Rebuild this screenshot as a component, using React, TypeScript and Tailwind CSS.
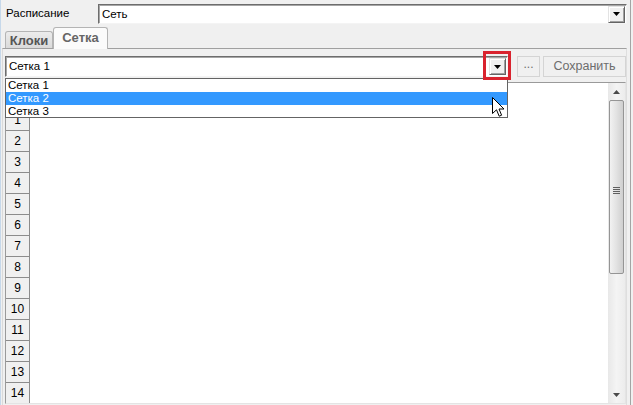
import React from 'react';

const Arrow = ({ up = false }: { up?: boolean }) => (
  <svg width="7" height="4" viewBox="0 0 7 4" className={up ? 'rotate-180' : ''}>
    <path d="M0 0 H7 L3.5 4 Z" fill="#000" />
  </svg>
);

const DropBtn = () => (
  <div className="w-[17px] h-[17px] flex items-center justify-center bg-[#f0f0f0] border border-t-[#e3e3e3] border-l-[#e3e3e3] border-b-[#646464] border-r-[#646464] shadow-[inset_1px_1px_0_#ffffff,inset_-1px_-1px_0_#a0a0a0]">
    <Arrow />
  </div>
);

const Combo = ({ value, className }: { value: string; className: string }) => (
  <div
    className={`flex items-center bg-white border border-t-[#6d6d6d] border-l-[#6d6d6d] border-b-[#f4f4f4] border-r-[#f4f4f4] shadow-[inset_1px_1px_0_#a6a6a6] ${className}`}
  >
    <span className="flex-1 pl-[3px] leading-none pt-[1px] text-[11.5px]">{value}</span>
    <div className="pr-[1px]">
      <DropBtn />
    </div>
  </div>
);

export default function App() {
  const rows = Array.from({ length: 14 }, (_, i) => i + 1);

  return (
    <div className="w-[633px] h-[405px] bg-[#f0f0f0] relative overflow-hidden font-['Liberation_Sans',Arial,sans-serif] text-[11px] text-black">
      <div className="w-[631px] h-full border-l border-l-[#c6d8ea] border-r border-r-[#a4a4a4] flex flex-col">
        {/* Расписание */}
        <div className="flex items-center pt-[4px] shrink-0">
          <div className="w-[97px] pl-[5px] text-[11.5px]">Расписание</div>
          <Combo value="Сеть" className="w-[529px] h-[20px]" />
        </div>

        {/* Tabs */}
        <div className="h-[24px] shrink-0 flex items-end pl-[4px]">
          <div className="w-[48px] h-[17px] rounded-t-[3px] border border-b-0 border-[#b4b4b4] bg-gradient-to-b from-[#ececec] to-[#dadada] flex items-center justify-center font-bold text-[13px] text-[#555] pt-[1px]">
            Клоки
          </div>
          <div className="relative z-10 -mb-px w-[55px] h-[22px] rounded-t-[3px] border border-b-0 border-[#b4b4b4] bg-[#fbfbfb] flex items-start justify-center font-bold text-[13px] text-[#666]">
            Сетка
          </div>
        </div>

        {/* Panel */}
        <div className="flex-1 min-h-0 ml-[1px] mr-[3px] border-t border-t-[#a0a0a0] border-l border-l-[#dadada] border-r border-r-[#dedede] pl-[2px] flex flex-col">
          <div className="flex items-center pt-[7px] h-[28px] shrink-0">
            <Combo value="Сетка 1" className="w-[503px] h-[21px]" />
            <div className="ml-[9px] w-[23px] h-[21px] border border-[#d4d4d4] flex items-end justify-center pb-[3px] text-[#6d6d6d] text-[12px]">
              ...
            </div>
            <div className="ml-[3px] w-[83px] h-[21px] border border-[#d4d4d4] flex items-center justify-center text-[#6d6d6d] text-[12.5px]">
              Сохранить
            </div>
          </div>

          {/* Grid */}
          <div className="mt-[5px] w-[621px] flex-1 min-h-0 bg-white border border-t-[#9a9a9a] border-l-[#9a9a9a] border-b-[#e4e4e4] border-r-[#e4e4e4] flex overflow-hidden">
            <div className="flex-1 min-h-0 flex flex-col overflow-hidden">
              <div className="w-[24px] h-[27px] shrink-0 bg-[#f0f0f0] border-r border-b border-[#8c8c8c]" />
              {rows.map((r) => (
                <div
                  key={r}
                  className="w-[24px] h-[21px] shrink-0 bg-[#f0f0f0] border-r border-b border-[#8c8c8c] flex items-center justify-center text-[12px]"
                >
                  {r}
                </div>
              ))}
            </div>

            {/* Scrollbar */}
            <div className="w-[17px] bg-gradient-to-r from-[#e8e8e8] via-[#f4f4f4] to-[#ececec] flex flex-col items-center">
              <div className="h-[17px] w-full flex items-center justify-center">
                <svg width="7" height="4" viewBox="0 0 7 4">
                  <path d="M3.5 0 L7 4 H0 Z" fill="#4a4a4a" />
                </svg>
              </div>
              <div className="w-[15px] h-[174px] rounded-[2px] border border-[#959595] bg-gradient-to-r from-[#f2f2f2] via-[#e2e2e2] to-[#cfcfcf] flex items-center justify-center">
                <div className="flex flex-col gap-[1px] mt-[6px]">
                  {[0, 1, 2, 3].map((i) => (
                    <div key={i} className="w-[7px] h-[1px] bg-[#5f5f5f]" />
                  ))}
                </div>
              </div>
              <div className="flex-1" />
              <div className="h-[17px] w-full flex items-center justify-center">
                <svg width="7" height="4" viewBox="0 0 7 4">
                  <path d="M0 0 H7 L3.5 4 Z" fill="#4a4a4a" />
                </svg>
              </div>
            </div>
          </div>
          <div className="h-[1px] shrink-0" />
        </div>
      </div>

      {/* Open dropdown list */}
      <div className="absolute left-[5px] top-[78px] w-[503px] h-[40px] bg-white border border-[#646464] flex flex-col text-[11.5px]">
        <div className="h-[13px] pl-[2px] leading-[13px]">Сетка 1</div>
        <div className="h-[13px] pl-[2px] leading-[13px] bg-[#3399ff] text-white">Сетка 2</div>
        <div className="h-[12px] pl-[2px] leading-[13px]">Сетка 3</div>
      </div>

      {/* Red highlight around the drop button */}
      <div className="absolute left-[483px] top-[51px] w-[28px] h-[29px] border-[3px] border-[#d9232e]" />

      {/* Mouse cursor */}
      <svg className="absolute left-[492px] top-[97px]" width="13" height="21" viewBox="0 0 13 21">
        <path d="M0.5 0.5 L0.5 16.5 L4.5 12.8 L7.2 19.2 L9.6 18.2 L7 12 L12 12 Z" fill="#fff" stroke="#000" strokeWidth="1" strokeLinejoin="miter" />
      </svg>
    </div>
  );
}
